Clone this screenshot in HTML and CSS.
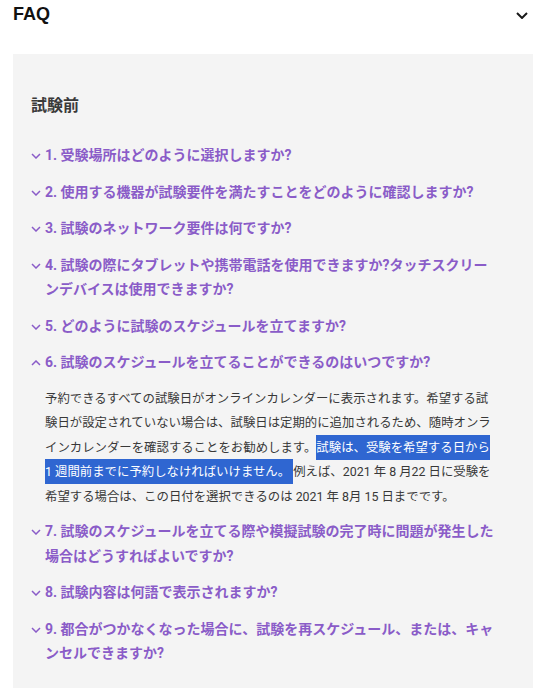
FILE: index.html
```html
<!DOCTYPE html>
<html lang="ja">
<head>
    <meta charset="UTF-8">
    <meta name="viewport" content="width=device-width, initial-scale=1.0">
    <title>FAQ</title>
    <link rel="stylesheet" href="styles.css">
</head>
<body>
    <!-- Section header -->
    <div class="faq-header">
        <h2>FAQ</h2>
        <svg class="header-chevron" width="12" height="7" viewBox="0 0 12 7">
            <polyline points="1,1 6,6 11,1" fill="none" stroke="#1a1a1a" stroke-width="2"/>
        </svg>
    </div>

    <div class="faq-panel">
        <h3>試験前</h3>

        <ul class="faq-list">
            <li class="faq-item">
                <div class="question">
                    <svg class="chevron" width="10" height="6" viewBox="0 0 10 6"><polyline points="1,1 5,5 9,1"/></svg>
                    <span>1. 受験場所はどのように選択しますか?</span>
                </div>
            </li>
            <li class="faq-item">
                <div class="question">
                    <svg class="chevron" width="10" height="6" viewBox="0 0 10 6"><polyline points="1,1 5,5 9,1"/></svg>
                    <span>2. 使用する機器が試験要件を満たすことをどのように確認しますか?</span>
                </div>
            </li>
            <li class="faq-item">
                <div class="question">
                    <svg class="chevron" width="10" height="6" viewBox="0 0 10 6"><polyline points="1,1 5,5 9,1"/></svg>
                    <span>3. 試験のネットワーク要件は何ですか?</span>
                </div>
            </li>
            <li class="faq-item">
                <div class="question">
                    <svg class="chevron" width="10" height="6" viewBox="0 0 10 6"><polyline points="1,1 5,5 9,1"/></svg>
                    <span>4. 試験の際にタブレットや携帯電話を使用できますか?タッチスクリーンデバイスは使用できますか?</span>
                </div>
            </li>
            <li class="faq-item">
                <div class="question">
                    <svg class="chevron" width="10" height="6" viewBox="0 0 10 6"><polyline points="1,1 5,5 9,1"/></svg>
                    <span>5. どのように試験のスケジュールを立てますか?</span>
                </div>
            </li>
            <!-- Open item -->
            <li class="faq-item open">
                <div class="question">
                    <svg class="chevron" width="10" height="6" viewBox="0 0 10 6"><polyline points="1,5 5,1 9,5"/></svg>
                    <span>6. 試験のスケジュールを立てることができるのはいつですか?</span>
                </div>
                <p class="answer">予約できるすべての試験日がオンラインカレンダーに表示されます。希望する試験日が設定されていない場合は、試験日は定期的に追加されるため、随時オンラインカレンダーを確認することをお勧めします。<span class="highlight">試験は、受験を希望する日から 1 週間前までに予約しなければいけません。 </span>例えば、2021 年 8 月22 日に受験を希望する場合は、この日付を選択できるのは 2021 年 8月 15 日までです。</p>
            </li>
            <li class="faq-item">
                <div class="question">
                    <svg class="chevron" width="10" height="6" viewBox="0 0 10 6"><polyline points="1,1 5,5 9,1"/></svg>
                    <span>7. 試験のスケジュールを立てる際や模擬試験の完了時に問題が発生した場合はどうすればよいですか?</span>
                </div>
            </li>
            <li class="faq-item">
                <div class="question">
                    <svg class="chevron" width="10" height="6" viewBox="0 0 10 6"><polyline points="1,1 5,5 9,1"/></svg>
                    <span>8. 試験内容は何語で表示されますか?</span>
                </div>
            </li>
            <li class="faq-item">
                <div class="question">
                    <svg class="chevron" width="10" height="6" viewBox="0 0 10 6"><polyline points="1,1 5,5 9,1"/></svg>
                    <span>9. 都合がつかなくなった場合に、試験を再スケジュール、または、キャンセルできますか?</span>
                </div>
            </li>
        </ul>
    </div>
</body>
</html>
```

FILE: styles.css
```css
/* General Page Styling */
body {
    font-family: Roboto, "Noto Sans CJK JP", sans-serif;
    margin: 0;
    padding: 0;
    background-color: #fff;
    color: #3c3c3c;
}

/* Top row with title and toggle */
.faq-header {
    display: flex;
    justify-content: space-between;
    align-items: center;
    height: 28px;
    padding: 0 12px 0 13px;
}

.faq-header h2 {
    margin: 0;
    font-family: "Liberation Sans", "Noto Sans CJK JP", sans-serif;
    font-size: 18px;
    font-weight: bold;
    color: #111;
}

.header-chevron {
    margin-top: 2px;
}

/* Grey panel holding the questions */
.faq-panel {
    background-color: #f4f4f4;
    margin: 26px 7px 0 13px;
    padding: 40px 36px 40px 18px;
}

.faq-panel h3 {
    margin: 0 0 19px;
    font-size: 16px;
    line-height: 24px;
    font-weight: bold;
    color: #3a3a3a;
}

.faq-list {
    list-style: none;
    margin: 0;
    padding: 0;
}

.faq-item {
    padding: 6px 0;
}

.question {
    display: flex;
    align-items: flex-start;
    font-size: 14px;
    line-height: 24.5px;
    font-weight: bold;
    color: #8a5cc8;
}

.chevron {
    flex: none;
    margin: 10px 4px 0 0;
    fill: none;
    stroke: #8a5cc8;
    stroke-width: 1.5;
}

/* Answer text of the open item */
.answer {
    margin: 12px 0 -2px 14px;
    font-size: 12.4px;
    line-height: 24.5px;
    color: #383838;
}

.highlight {
    background-color: #2f66d1;
    color: #fff;
    padding: 5px 0;
}
```
